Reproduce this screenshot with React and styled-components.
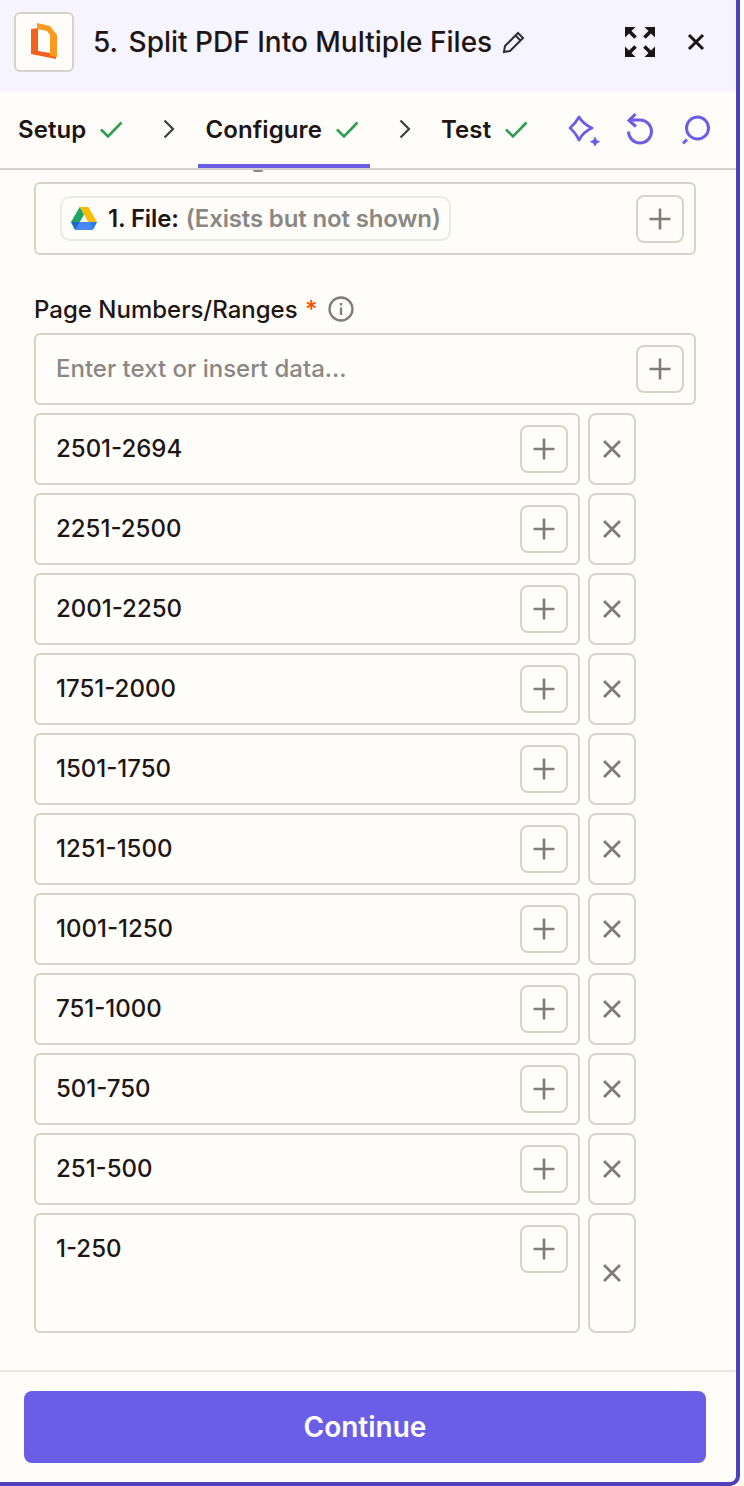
import React from "react";
import styled, { createGlobalStyle } from "styled-components";

const ranges = [
  "2501-2694",
  "2251-2500",
  "2001-2250",
  "1751-2000",
  "1501-1750",
  "1251-1500",
  "1001-1250",
  "751-1000",
  "501-750",
  "251-500",
];

const expandArrow = "M0 0H10.500L6.500 4 11.800 9.300 9.300 11.800 4 6.500 0 10.500z";

const Check = () => (
  <svg width="24" height="24" viewBox="0 0 24 24" fill="none" stroke="#2d9d4f" strokeWidth="2.6">
    <path d="M1 12.5l7 7L21.500 5.500" />
  </svg>
);

const Plus = () => (
  <svg width="24" height="24" viewBox="0 0 24 24" fill="none" stroke="#7f7c79" strokeWidth="2.6">
    <path d="M12 1.500v21M1.500 12h21" />
  </svg>
);

const Cross = () => (
  <svg width="18" height="18" viewBox="0 0 18 18" fill="none" stroke="#7f7c79" strokeWidth="2.8">
    <path d="M1 1l16 16M17 1L1 17" />
  </svg>
);

function InsertButton() {
  return (
    <AddButton>
      <Plus />
    </AddButton>
  );
}

function App() {
  return (
    <>
      <GlobalStyle />
      <Panel>
        <Header>
          <AppIcon>
            <svg width="28" height="38" viewBox="0 0 28 38">
              <path d="M1 6l7-1v23l18 3v5L1 31z" fill="#f4611d" />
              <path d="M7 0l13 3 7 9v22l-7-1V12l-3-4-10-2z" fill="#fb9a1f" />
            </svg>
          </AppIcon>
          <Title>
            <StepNumber>5.</StepNumber> Split PDF Into Multiple Files
          </Title>
          <PencilIcon width="24" height="24" viewBox="0 0 24 24" fill="none" stroke="#2d2e2e" strokeWidth="2">
            <path d="M2 22l1-6L16 3l5 5L8 21z M13.500 5.500l5 5" />
          </PencilIcon>
          <HeaderActions>
            <svg width="30" height="30" viewBox="0 0 30 30" fill="#1a1513">
              <path d={expandArrow} />
              <path d={expandArrow} transform="translate(30 0) scale(-1 1)" />
              <path d={expandArrow} transform="translate(0 30) scale(1 -1)" />
              <path d={expandArrow} transform="translate(30 30) scale(-1 -1)" />
            </svg>
            <svg width="18" height="18" viewBox="0 0 18 18" fill="none" stroke="#1a1513" strokeWidth="3">
              <path d="M2 2l14 14M16 2L2 16" />
            </svg>
          </HeaderActions>
        </Header>

        <Tabs>
          <Tab>Setup<Check /></Tab>
          <ChevronIcon width="14" height="24" viewBox="0 0 14 24" fill="none" stroke="#403f3e" strokeWidth="2.2">
            <path d="M2.500 3.500l8.500 8.500-8.500 8.500" />
          </ChevronIcon>
          <Tab $active>Configure<Check /></Tab>
          <ChevronIcon width="14" height="24" viewBox="0 0 14 24" fill="none" stroke="#403f3e" strokeWidth="2.2">
            <path d="M2.500 3.500l8.500 8.500-8.500 8.500" />
          </ChevronIcon>
          <Tab>Test<Check /></Tab>
          <ToolIcons>
            <svg width="34" height="34" viewBox="0 0 34 34" fill="none" stroke="#6a5ee6" strokeWidth="2.800" strokeLinejoin="round">
              <path d="M12 5Q16 12 25 16Q16 20 12 28Q8 20 3 16Q8 12 12 5z" />
              <path d="M28 24.500l1.800 3.400 3.400 1.800-3.400 1.800-1.800 3.400-1.800-3.400-3.400-1.800 3.400-1.800z" fill="#6a5ee6" stroke="none" />
            </svg>
            <svg width="30" height="34" viewBox="0 0 30 34" fill="none" stroke="#6a5ee6" strokeWidth="3">
              <path d="M4 8H15a11.500 11.500 0 1 1-11.500 11.500" />
              <path d="M10.500 2L4 8.500l7 6" />
            </svg>
            <svg width="30" height="32" viewBox="0 0 30 32" fill="none" stroke="#6a5ee6" strokeWidth="3">
              <circle cx="17.500" cy="15" r="11" />
              <path d="M7 26.500l-4 4" />
            </svg>
          </ToolIcons>
        </Tabs>

        <Body>
          <ClippedDescender />
          <Field $height={73}>
            <Pill>
              <svg width="26" height="23" viewBox="0 0 26 23">
                <path d="M8.700 0H17.300L26 15H17.300z" fill="#fbbc04" />
                <path d="M8.700 0L13 7.500 4.300 23 0 15z" fill="#1fa463" />
                <path d="M8.700 15H26L21.700 23H4.300z" fill="#4688f4" />
                <path d="M4.300 23L8.700 15H0z" fill="#1967d2" />
                <path d="M21.700 23L26 15H19z" fill="#2b7de9" />
              </svg>
              <PillKey>1. File:</PillKey>
              <PillValue>(Exists but not shown)</PillValue>
            </Pill>
            <InsertButton />
          </Field>

          <Label>
            Page Numbers/Ranges <Required>*</Required>
            <svg width="26" height="26" viewBox="0 0 26 26" fill="none" stroke="#7f7c79" strokeWidth="2.300">
              <circle cx="13" cy="13" r="11.500" />
              <path d="M13 11.500v7.500M13 7v2.500" />
            </svg>
          </Label>

          <Field>
            <Placeholder>Enter text or insert data...</Placeholder>
            <InsertButton />
          </Field>

          <Rows>
            {ranges.map((r) => (
              <Row key={r}>
                <RowInput>
                  <RowValue>{r}</RowValue>
                  <InsertButton />
                </RowInput>
                <RemoveButton>
                  <Cross />
                </RemoveButton>
              </Row>
            ))}
            <Row>
              <RowInput $tall>
                <RowValue>1-250</RowValue>
                <InsertButton />
              </RowInput>
              <RemoveButton>
                <Cross />
              </RemoveButton>
            </Row>
          </Rows>
        </Body>

        <Footer>
          <ContinueButton>Continue</ContinueButton>
        </Footer>
      </Panel>
    </>
  );
}

const GlobalStyle = createGlobalStyle`
  html, body {
    margin: 0;
    padding: 0;
    background: #fffdf9;
    font-family: Inter, "Liberation Sans", sans-serif;
    color: #201515;
  }
`;

const Panel = styled.div`
  box-sizing: border-box;
  width: 740px;
  height: 1486px;
  display: flex;
  flex-direction: column;
  background: #fffdf9;
  border-right: 4px solid #4f41b9;
  border-bottom: 4px solid #4f41b9;
  border-bottom-right-radius: 10px;
  overflow: hidden;
`;

const Header = styled.div`
  height: 92px;
  flex-shrink: 0;
  display: flex;
  align-items: center;
  padding: 0 31px 8px 14px;
  box-sizing: border-box;
  background: #f5f4ff;
`;

const AppIcon = styled.div`
  box-sizing: border-box;
  width: 60px;
  height: 60px;
  display: flex;
  align-items: center;
  justify-content: center;
  background: #fffdf9;
  border: 2px solid #d7d3cb;
  border-radius: 6px;
`;

const Title = styled.div`
  margin-left: 19px;
  font-size: 28px;
  font-weight: 500;
  white-space: nowrap;
`;

const StepNumber = styled.span`
  margin-right: 3px;
`;

const PencilIcon = styled.svg`
  margin-left: 10px;
`;

const HeaderActions = styled.div`
  margin-left: auto;
  display: flex;
  align-items: center;
  gap: 32px;
`;

const Tabs = styled.div`
  height: 78px;
  flex-shrink: 0;
  box-sizing: border-box;
  display: flex;
  align-items: stretch;
  padding: 0 26px 0 18px;
  border-bottom: 2px solid #d7d3cb;
`;

const Tab = styled.div`
  position: relative;
  display: flex;
  align-items: center;
  gap: 14px;
  padding-bottom: 2px;
  font-size: 24px;
  font-weight: 600;
  letter-spacing: 0.1px;

  &::after {
    content: "";
    display: ${(p) => (p.$active ? "block" : "none")};
    position: absolute;
    left: -7px;
    right: -10px;
    bottom: 0;
    height: 4px;
    background: #6a5ee6;
  }
`;

const ChevronIcon = styled.svg`
  align-self: center;
  margin: 0 29px 3px 38px;
`;

const ToolIcons = styled.div`
  margin-left: auto;
  display: flex;
  align-items: center;
  gap: 24px;
  padding-bottom: 2px;

  svg:last-child {
    margin-left: 1px;
  }
`;

const Body = styled.div`
  position: relative;
  flex: 1;
  padding: 12px 40px 0 34px;
  min-height: 0;
`;

const ClippedDescender = styled.div`
  position: absolute;
  left: 253px;
  top: 0;
  width: 10px;
  height: 2px;
  background: #8a8784;
  border-radius: 0 0 5px 5px;
`;

const Field = styled.div`
  box-sizing: border-box;
  height: ${(p) => p.$height || 72}px;
  display: flex;
  align-items: center;
  justify-content: space-between;
  padding: 0 10px 0 20px;
  border: 2px solid #d7d3cb;
  border-radius: 6px;
`;

const Pill = styled.div`
  box-sizing: border-box;
  height: 45px;
  margin-left: 4px;
  display: flex;
  align-items: center;
  padding: 0 8px 0 9px;
  border: 2px solid #ece9e3;
  border-radius: 10px;
  font-size: 24px;
  font-weight: 600;
  letter-spacing: -0.15px;
`;

const PillKey = styled.span`
  margin-left: 11px;
`;

const PillValue = styled.span`
  margin-left: 7px;
  color: #8a8784;
`;

const Label = styled.div`
  display: flex;
  align-items: center;
  margin: 35px 0 5px;
  height: 38px;
  font-size: 24px;
  font-weight: 500;
  white-space: pre;

  svg {
    margin-left: 10px;
  }
`;

const Required = styled.span`
  margin-left: 1px;
  color: #ff4f00;
`;

const AddButton = styled.div`
  box-sizing: border-box;
  width: 48px;
  height: 48px;
  display: flex;
  align-items: center;
  justify-content: center;
  border: 2px solid #d7d3cb;
  border-radius: 8px;
  flex-shrink: 0;
`;

const Placeholder = styled.span`
  padding-bottom: 2px;
  font-size: 24px;
  font-weight: 500;
  color: #8a8784;
`;

const Rows = styled.div`
  margin-top: 8px;
  display: flex;
  flex-direction: column;
  gap: 8px;
`;

const Row = styled.div`
  display: flex;
  gap: 8px;
`;

const RowInput = styled.div`
  box-sizing: border-box;
  width: 546px;
  height: ${(p) => (p.$tall ? "120px" : "72px")};
  display: flex;
  align-items: flex-start;
  justify-content: space-between;
  padding: 10px 10px 0 20px;
  border: 2px solid #d7d3cb;
  border-radius: 6px;
`;

const RowValue = styled.span`
  font-size: 24px;
  font-weight: 500;
  line-height: 48px;
`;

const RemoveButton = styled.div`
  box-sizing: border-box;
  width: 48px;
  display: flex;
  align-items: center;
  justify-content: center;
  border: 2px solid #d7d3cb;
  border-radius: 8px;
`;

const Footer = styled.div`
  height: 112px;
  flex-shrink: 0;
  box-sizing: border-box;
  padding: 19px 30px 0 24px;
  border-top: 2px solid #e9e7e2;
`;

const ContinueButton = styled.button`
  width: 100%;
  height: 72px;
  border: none;
  border-radius: 8px;
  background: #6a5ee6;
  color: #fffdf9;
  font-family: inherit;
  font-size: 28px;
  font-weight: 600;
`;

export default App;
